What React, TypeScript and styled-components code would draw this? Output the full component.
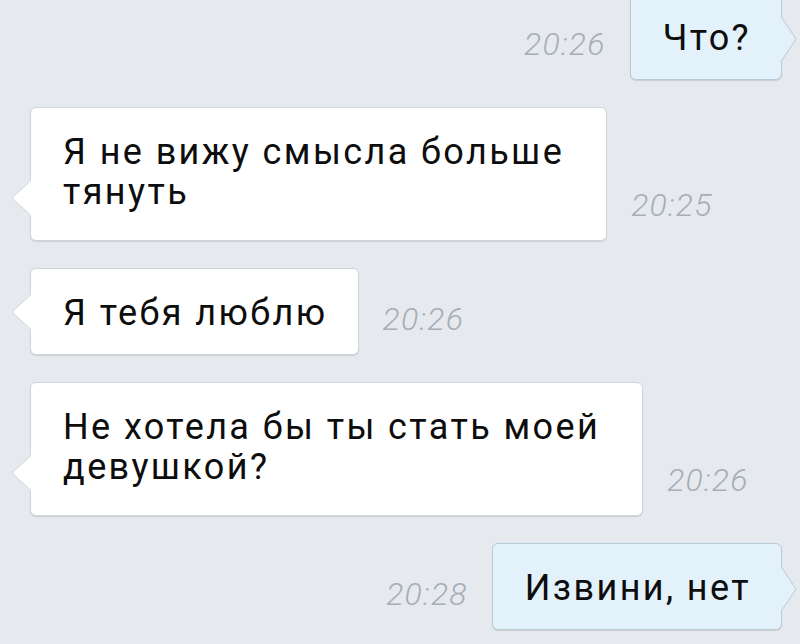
import React from "react";
import styled, { createGlobalStyle, css } from "styled-components";

const GlobalStyle = createGlobalStyle`
  html, body {
    margin: 0;
    padding: 0;
    background: #e6eaee;
    overflow: hidden;
  }
  body {
    font-family: Roboto, "Noto Sans", sans-serif;
  }
`;

const Screen = styled.div`
  width: 800px;
  height: 644px;
  overflow: hidden;
  background: #e6eaee;
`;

const Feed = styled.div`
  display: flex;
  flex-direction: column;
  gap: 27px;
  margin-top: -7px;
  padding: 0 18px 0 30px;
`;

const Row = styled.div<{ $out?: boolean }>`
  display: flex;
  align-items: flex-end;
  gap: 24px;
  justify-content: ${(p) => (p.$out ? "flex-end" : "flex-start")};
`;

const Bubble = styled.div<{ $out?: boolean; $multi?: boolean }>`
  position: relative;
  box-sizing: border-box;
  padding: ${(p) => (p.$multi ? "24px 42px 28px 32px" : "24px 30px 21px 32px")};
  border-radius: 6px;
  font-size: 36px;
  line-height: 40px;
  letter-spacing: 2.4px;
  color: #0d0d0d;
  white-space: pre-line;
  box-shadow: 0 1px 1px rgba(0, 0, 0, 0.12);
  ${(p) =>
    p.$out
      ? css`
          background: #e3f1fb;
          border: 1px solid #b9cad7;
        `
      : css`
          background: #ffffff;
          border: 1px solid #cfd5dc;
        `}
`;

const Tail = styled.svg<{ $out?: boolean }>`
  position: absolute;
  overflow: visible;
  ${(p) =>
    p.$out
      ? css`
          right: -16px;
          bottom: 17px;
          width: 16px;
          height: 46px;
        `
      : css`
          left: -20px;
          bottom: 24px;
          width: 20px;
          height: 36px;
        `}
`;

const Time = styled.span`
  font-size: 32px;
  line-height: 32px;
  font-style: italic;
  font-weight: 300;
  letter-spacing: 1.2px;
  color: #a7aeb6;
  margin-bottom: 20px;
`;

type Msg = { text: string; time: string; out?: boolean; multi?: boolean };

const messages: Msg[] = [
  { text: "Что?", time: "20:26", out: true },
  { text: "Я не вижу смысла больше\nтянуть", time: "20:25", multi: true },
  { text: "Я тебя люблю", time: "20:26" },
  { text: "Не хотела бы ты стать моей\nдевушкой?", time: "20:26", multi: true },
  { text: "Извини, нет", time: "20:28", out: true },
];

const BubbleTail = ({ out }: { out?: boolean }) => {
  const fill = out ? "#e3f1fb" : "#ffffff";
  const stroke = out ? "#b9cad7" : "#cfd5dc";
  if (out) {
    return (
      <Tail $out viewBox="0 0 16 46">
        <polygon points="0,0 15,23 0,46" fill={fill} />
        <polyline points="0,0.5 15,23 0,45.5" fill="none" stroke={stroke} strokeWidth="1" />
      </Tail>
    );
  }
  return (
    <Tail viewBox="0 0 20 36">
      <polygon points="20,0 1,18 20,36" fill={fill} />
      <polyline points="20,0.5 1,18 20,35.5" fill="none" stroke={stroke} strokeWidth="1" />
    </Tail>
  );
};

const App = () => {
  return (
    <Screen>
      <GlobalStyle />
      <Feed>
        {messages.map((m, i) => (
          <Row key={i} $out={m.out}>
            {m.out && <Time>{m.time}</Time>}
            <Bubble $out={m.out} $multi={m.multi}>
              {m.text}
              <BubbleTail out={m.out} />
            </Bubble>
            {!m.out && <Time>{m.time}</Time>}
          </Row>
        ))}
      </Feed>
    </Screen>
  );
};

export default App;
